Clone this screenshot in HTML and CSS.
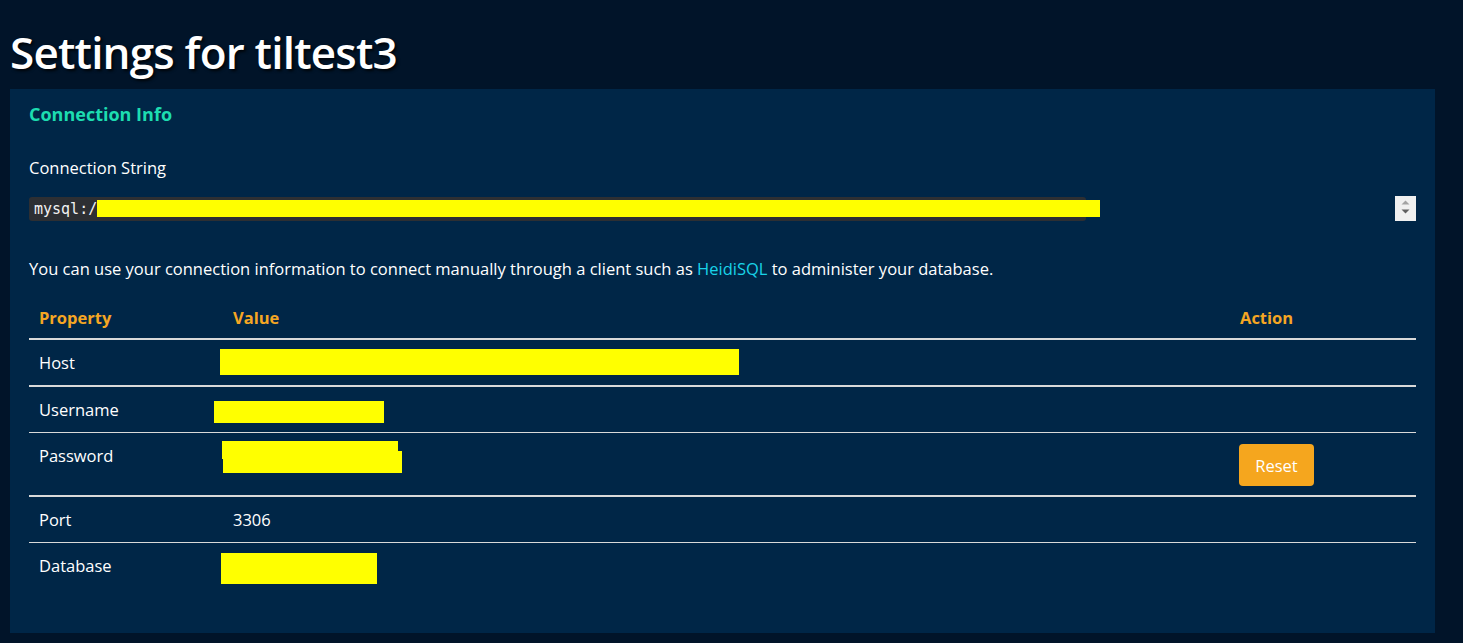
FILE: index.html
```html
<!DOCTYPE html>
<html>
<head>
<meta charset="utf-8">
<link rel="stylesheet" href="styles.css">
</head>
<body>
<div class="page">
  <h1 class="title">Settings for tiltest3</h1>
  <section class="card">
    <h2 class="card-title">Connection Info</h2>
    <div class="label">Connection String</div>
    <div class="conn-row">
      <code class="conn-code">mysql:/<span class="redact redact-conn"></span></code>
      <div class="spinner">
        <svg width="21" height="25" viewBox="0 0 21 25">
          <rect width="21" height="25" fill="#f0f0f0"/>
          <path d="M6.5 8.5 L10.5 4.5 L14.5 8.5 Z" fill="#a3a3a3"/>
          <path d="M6.5 13.5 L14.5 13.5 L10.5 17.5 Z" fill="#606060"/>
        </svg>
      </div>
    </div>
    <p class="info">You can use your connection information to connect manually through a client such as <a class="link" href="#">HeidiSQL</a> to administer your database.</p>
    <table class="props">
      <thead>
        <tr>
          <th class="col-prop">Property</th>
          <th class="col-val">Value</th>
          <th class="col-act">Action</th>
        </tr>
      </thead>
      <tbody>
        <tr class="b2 host-row">
          <td>Host</td>
          <td><span class="redact r-host"></span></td>
          <td></td>
        </tr>
        <tr class="b2">
          <td>Username</td>
          <td><span class="redact r-user"></span></td>
          <td></td>
        </tr>
        <tr class="tall">
          <td class="top">Password</td>
          <td class="top"><div class="pw-stack"><span class="redact r-pw1"></span><span class="redact r-pw2"></span></div></td>
          <td><button class="btn-reset">Reset</button></td>
        </tr>
        <tr class="b2">
          <td>Port</td>
          <td>3306</td>
          <td></td>
        </tr>
        <tr>
          <td>Database</td>
          <td><span class="redact r-db"></span></td>
          <td></td>
        </tr>
      </tbody>
    </table>
  </section>
</div>
</body>
</html>
```
FILE: styles.css
```css
* { box-sizing: border-box; }
html, body {
  margin: 0;
  padding: 0;
  background: #011429;
  font-family: "Open Sans", "Noto Sans", sans-serif;
  color: #ffffff;
}
.page {
  padding: 24px 28px 11px 10px;
}
.title {
  margin: 0 0 9px 0;
  font-size: 44px;
  line-height: 56px;
  font-weight: 600;
  color: #ffffff;
  text-shadow: 2px 2px 3px rgba(0,0,0,0.8);
  letter-spacing: -0.8px;
}
.card {
  background: #002647;
  padding: 12px 19px 45px 19px;
}
.card-title {
  margin: 0;
  font-size: 18px;
  line-height: 26px;
  font-weight: 700;
  color: #1ddcb0;
}
.label {
  margin-top: 30px;
  font-size: 16.5px;
  line-height: 22px;
}
.conn-row {
  margin-top: 17px;
  display: flex;
  align-items: center;
  justify-content: space-between;
  height: 25px;
}
.conn-code {
  display: flex;
  align-items: center;
  width: 1057px;
  height: 24px;
  background: #2d2f33;
  border-radius: 3px;
  padding-left: 5px;
  font-family: "DejaVu Sans Mono", "Liberation Mono", monospace;
  font-size: 15px;
  font-weight: 400;
  color: #f2f2f2;
}
.spinner { display: flex; height: 25px; }
.redact {
  display: inline-block;
  background: #ffff00;
}
.redact-conn {
  width: 1003px;
  height: 17px;
  flex: none;
}
.info {
  margin: 36px 0 0 0;
  font-size: 16.5px;
  line-height: 24px;
}
.link {
  color: #19d3e8;
  text-decoration: none;
}
.props {
  width: 100%;
  margin-top: 16px;
  border-collapse: collapse;
  font-size: 16.5px;
}
.props th {
  text-align: left;
  color: #f5a623;
  font-weight: 700;
  height: 42px;
  padding: 0 10px;
  vertical-align: middle;
  border-bottom: 2px solid #d9d9d9;
}
.col-prop { width: 194px; }
.col-act { width: 186px; }
.props td {
  height: 46px;
  padding: 0 10px;
  vertical-align: middle;
}
.props tr.b2 td { border-bottom: 1px solid #d9d9d9; }
.props tr.host-row td { height: 47px; border-bottom: 2px solid #d9d9d9; }
.props tr.tall td { height: 64px; border-bottom: 2px solid #d9d9d9; }
.props td.top { vertical-align: top; padding-top: 11px; }
.r-host { width: 519px; height: 26px; margin-left: -13px; vertical-align: middle; margin-top: -4px; }
.r-user { width: 170px; height: 22px; margin-left: -19px; vertical-align: middle; margin-top: 6px; }
.pw-stack { position: relative; height: 34px; margin-left: -11px; margin-top: -3px; }
.r-pw1 { position: absolute; left: 0; top: 0; width: 176px; height: 18px; }
.r-pw2 { position: absolute; left: 1px; top: 10px; width: 179px; height: 22px; }
.r-db { width: 156px; height: 31px; margin-left: -12px; vertical-align: middle; margin-top: 7px; }
.btn-reset {
  background: #f5a61e;
  color: #ffffff;
  border: none;
  border-radius: 4px;
  width: 75px;
  height: 42px;
  font-family: "Open Sans", "Noto Sans", sans-serif;
  font-size: 16.5px;
  margin-left: -1px;
  margin-top: 3px;
}
```
